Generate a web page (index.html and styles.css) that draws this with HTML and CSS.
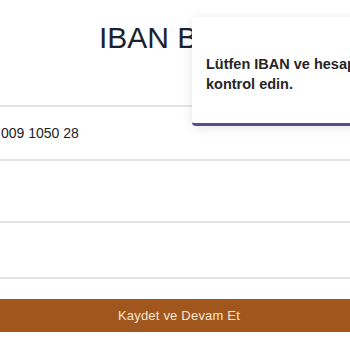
FILE: index.html
```html
<!DOCTYPE html>
<html lang="tr">
<head>
<meta charset="utf-8">
<link rel="stylesheet" href="styles.css">
</head>
<body>
<main class="page">
  <h1 class="title">IBAN Bilgileri</h1>
  <div class="field field-first">009 1050 28</div>
  <div class="field field-tall"></div>
  <div class="field"></div>
  <button class="submit">Kaydet ve Devam Et</button>
</main>
<div class="toast">Lütfen IBAN ve hesap bilgilerinizi kontrol edin.</div>
</body>
</html>
```
FILE: styles.css
```css
html, body {
  margin: 0;
  padding: 0;
  background: #ffffff;
  overflow: hidden;
  width: 350px;
  height: 350px;
}
body {
  font-family: "Liberation Sans", Arial, sans-serif;
  position: relative;
}
.page {
  display: flex;
  flex-direction: column;
}
.title {
  margin: 20px 0 0 0;
  padding-left: 99px;
  height: 85px;
  font-size: 30px;
  line-height: 36px;
  font-weight: 400;
  color: #1b2130;
  white-space: nowrap;
}
.field {
  height: 54px;
  border-bottom: 2px solid #e4e4e4;
  font-size: 14px;
  line-height: 52px;
  color: #222222;
  padding-left: 1px;
}
.field-first {
  border-top: 2px solid #e4e4e4;
  height: 52px;
}
.field-tall {
  height: 60px;
}
.submit {
  margin-top: 20px;
  height: 33px;
  border: none;
  background: #a0561d;
  color: #f7e6d4;
  font-family: "Liberation Sans", Arial, sans-serif;
  font-size: 13px;
  letter-spacing: 0.2px;
  padding: 0 0 0 8px;
  width: 100%;
}
.toast {
  position: absolute;
  left: 192px;
  top: 17px;
  width: 290px;
  box-sizing: border-box;
  padding: 37px 16px 29px 14px;
  background: #ffffff;
  border-radius: 4px;
  border-bottom: 3px solid #574e86;
  box-shadow: 0 2px 12px rgba(0, 0, 0, 0.1);
  font-size: 14.5px;
  line-height: 20px;
  font-weight: 700;
  color: #262626;
}
```
